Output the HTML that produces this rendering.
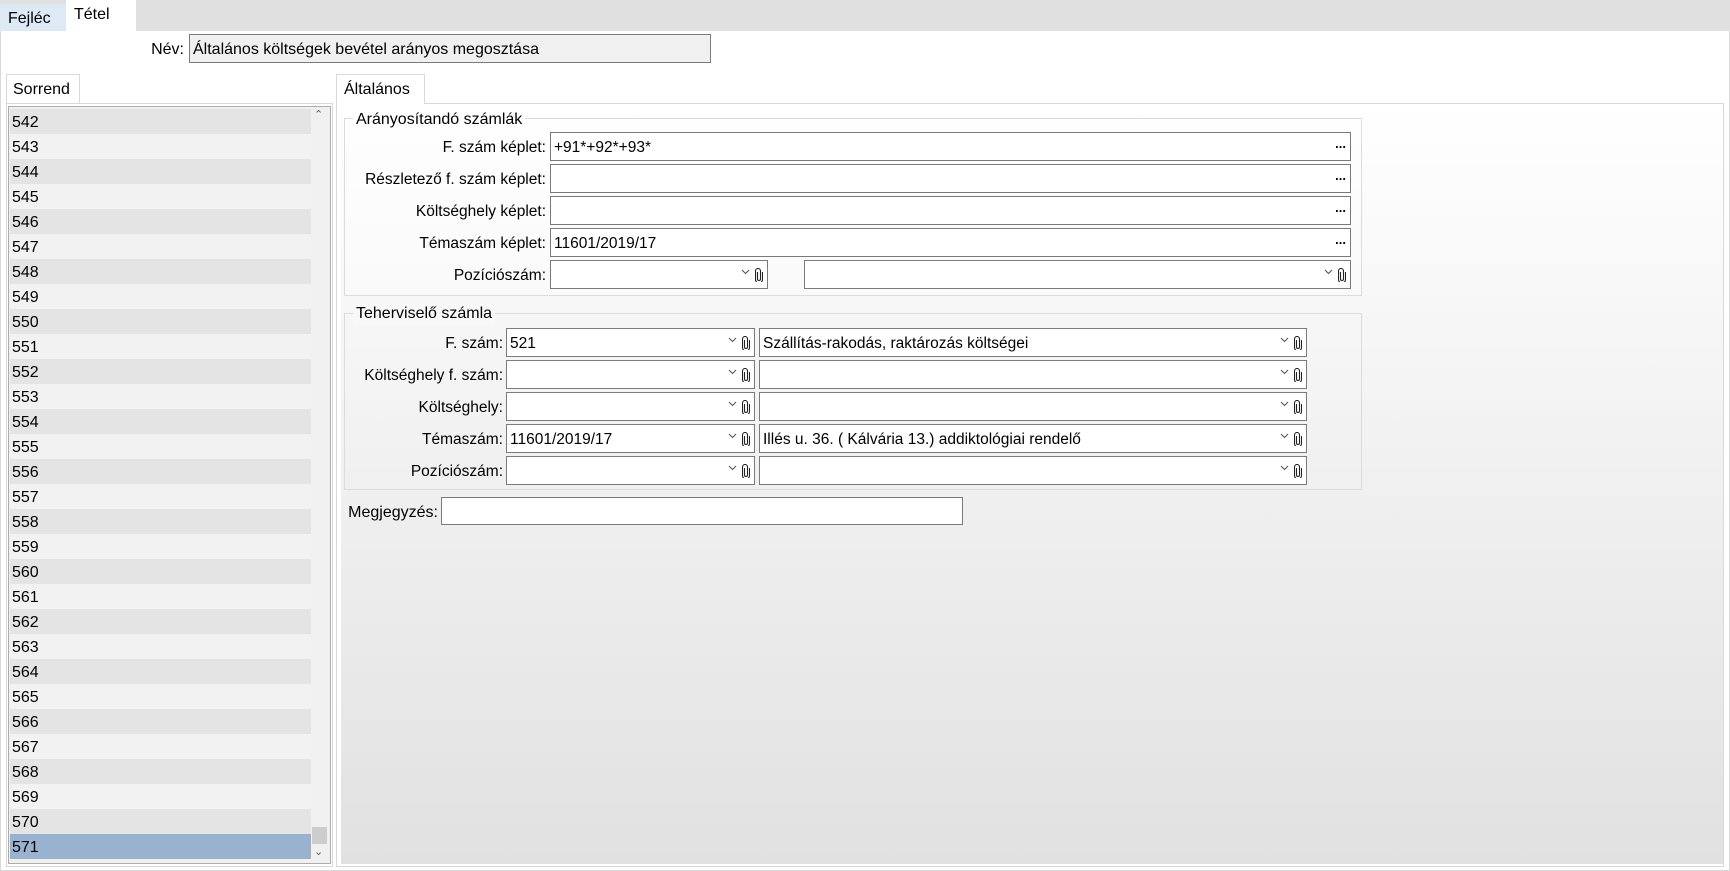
<!DOCTYPE html>
<html><head><meta charset="utf-8"><style>
*{box-sizing:border-box;margin:0;padding:0}
body{width:1730px;height:871px;background:#fff;font-family:"Liberation Sans",sans-serif;font-size:15.5px;color:#000;position:relative;overflow:hidden}
.a{position:absolute}
.inp{position:absolute;border:1px solid #7a7a7a;background:#fff;height:29px;line-height:29px;padding-left:3px;white-space:nowrap}
.lbl{position:absolute;text-align:right;line-height:31px;height:29px;white-space:nowrap}
.dots{position:absolute;right:4px;top:-4px;font-weight:bold;font-size:13px}
.ic{position:absolute;top:8px}
.row{position:absolute;left:10px;width:301px;height:25px;line-height:28px;padding-left:2px;font-size:16px}
</style></head><body>
<div class="a" style="left:0;top:0;width:1730px;height:31px;background:#e0e0e0"></div>
<div class="a" style="left:0;top:4px;width:66px;height:27px;background:#dde9f5;line-height:29px;padding-left:8px;font-size:16px">Fejléc</div>
<div class="a" style="left:66px;top:0;width:70px;height:32px;background:#fff;line-height:30px;padding-left:8px;font-size:16px">Tétel</div>
<div class="a" style="left:0;top:31px;width:1730px;height:840px;border:1px solid #d9d9d9;border-top:none"></div>
<div class="lbl" style="left:140px;width:44px;top:34px;font-size:16px">Név:</div>
<div class="inp" style="left:189px;top:34px;width:522px;background:#f0f0f0;font-size:16px">Általános költségek bevétel arányos megosztása</div>

<div class="a" style="left:6px;top:74px;width:74px;height:30px;border:1px solid #d9d9d9;border-bottom:none;background:#fff;line-height:30px;padding-left:6px;font-size:16px">Sorrend</div>
<div class="a" style="left:6px;top:103px;width:327px;height:764px;border:1px solid #d9d9d9;border-top:1px solid #d9d9d9"></div>
<div class="a" style="left:8px;top:106px;width:323px;height:758px;border:1px solid #adadad;background:#f0f0f0"></div>
<div id="list"></div>
<div class="a" style="left:312px;top:827px;width:15px;height:17px;background:#cdcdcd"></div>
<div class="a" style="left:314px;top:108px;font-size:11px;color:#606060">&#8963;</div>
<div class="a" style="left:314px;top:845px;font-size:11px;color:#606060">&#8964;</div>

<div class="a" style="left:336px;top:74px;width:89px;height:30px;border:1px solid #d9d9d9;border-bottom:none;background:#fff;line-height:30px;padding-left:7px;font-size:16px;z-index:2">Általános</div>
<div class="a" style="left:336px;top:103px;width:1388px;height:764px;border:1px solid #d9d9d9"></div>
<div class="a" style="left:341px;top:104px;width:1382px;height:760px;background:linear-gradient(#fff,#e1e1e1)"></div>

<div class="a" style="left:344px;top:118px;width:1018px;height:178px;border:1px solid #dcdcdc;background:rgba(255,255,255,.3)"></div>
<div class="a" style="left:353px;top:109px;background:#fff;padding:0 3px;font-size:16px;line-height:22px">Arányosítandó számlák</div>
<div class="a" style="left:344px;top:313px;width:1018px;height:177px;border:1px solid #dcdcdc"></div>
<div class="a" style="left:353px;top:303px;background:#f8f8f8;padding:0 3px;font-size:16px;line-height:22px">Teherviselő számla</div>
<div id="f"></div>
<div class="lbl" style="left:300px;width:138px;top:497px;font-size:16px">Megjegyzés:</div>
<div class="inp" style="left:441px;top:497px;width:522px;height:28px"></div>
<script>
var h='';
for(var i=0;i<30;i++){var bg=i==29?'#98b2d0':(i%2?'#f2f2f2':'#e4e4e4');h+='<div class="row" style="top:'+(109+i*25)+'px;background:'+bg+'">'+(542+i)+'</div>';}
document.getElementById('list').innerHTML=h;
var chev='<svg class="ic" width="9" height="6" viewBox="0 0 9 6"><path d="M1 1l3.5 3.5L8 1" stroke="#555" fill="none" stroke-width="1.1"/></svg>';
var clip='<svg class="ic" style="top:7px" width="8" height="14" viewBox="0 0 8 14"><path d="M2.5 4v7a1.5 1.5 0 0 0 3 0V3a2.5 2.5 0 0 0-5 0v8.5a3.5 3.5 0 0 0 7 0V4" stroke="#222" fill="none" stroke-width="1.1"/></svg>';
function combo(x,y,w,t){return '<div class="inp" style="left:'+x+'px;top:'+y+'px;width:'+w+'px">'+(t||'')+'<span style="position:absolute;left:'+(w-28)+'px;top:0">'+chev+'</span><span style="position:absolute;left:'+(w-14)+'px;top:0">'+clip+'</span></div>';}
var g='',L1=['F. szám képlet:','Részletező f. szám képlet:','Költséghely képlet:','Témaszám képlet:'],V1=['+91*+92*+93*','','','11601/2019/17'];
for(var i=0;i<4;i++){var y=132+i*32;g+='<div class="lbl" style="left:340px;width:206px;top:'+y+'px">'+L1[i]+'</div><div class="inp" style="left:550px;top:'+y+'px;width:801px">'+V1[i]+'<span class="dots">...</span></div>';}
g+='<div class="lbl" style="left:340px;width:206px;top:260px">Pozíciószám:</div>'+combo(550,260,218)+combo(804,260,547);
var L2=['F. szám:','Költséghely f. szám:','Költséghely:','Témaszám:','Pozíciószám:'],A=['521','','','11601/2019/17',''],B=['Szállítás-rakodás, raktározás költségei','','','Illés u. 36. ( Kálvária 13.) addiktológiai rendelő',''];
for(var i=0;i<5;i++){var y=328+i*32;g+='<div class="lbl" style="left:340px;width:163px;top:'+y+'px">'+L2[i]+'</div>'+combo(506,y,249,A[i])+combo(759,y,548,B[i]);}
document.getElementById('f').innerHTML=g;
</script>
</body></html>
